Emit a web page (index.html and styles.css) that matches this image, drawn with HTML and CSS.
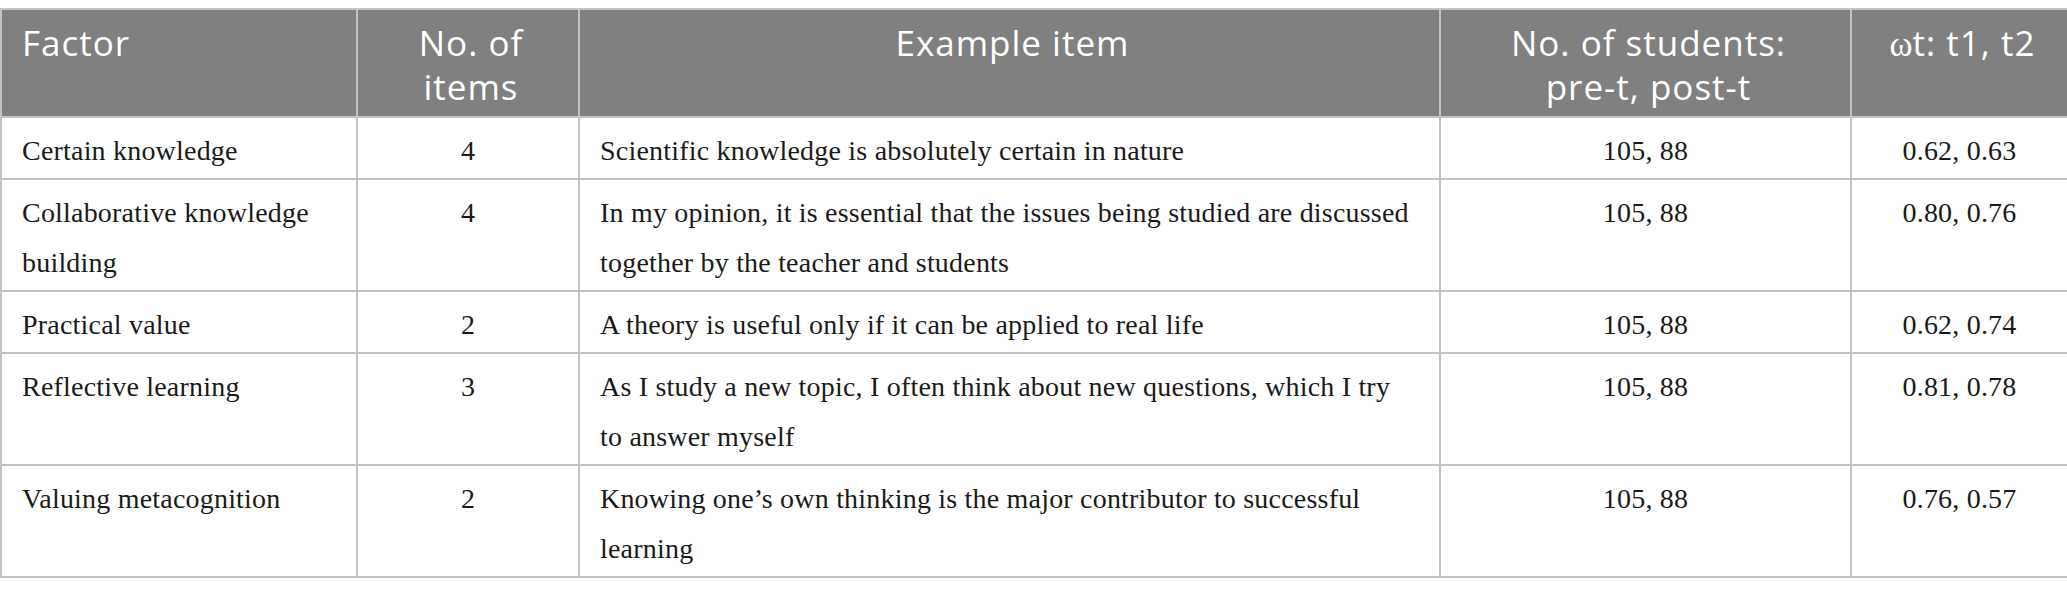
FILE: index.html
```html
<!DOCTYPE html>
<html lang="en">
<head>
<meta charset="utf-8">
<title>Table</title>
<link rel="stylesheet" href="styles.css">
</head>
<body>
<table class="data">
  <colgroup>
    <col class="c1"><col class="c2"><col class="c3"><col class="c4"><col class="c5">
  </colgroup>
  <thead>
    <tr>
      <th class="left">Factor</th>
      <th>No. of<br>items</th>
      <th>Example item</th>
      <th>No. of students:<br>pre-t, post-t</th>
      <th><span class="omega">ω</span>t: t1, t2</th>
    </tr>
  </thead>
  <tbody>
    <tr>
      <td>Certain knowledge</td>
      <td class="ctr">4</td>
      <td class="item">Scientific knowledge is absolutely certain in nature</td>
      <td class="ctr">105, 88</td>
      <td class="ctr">0.62, 0.63</td>
    </tr>
    <tr>
      <td>Collaborative knowledge building</td>
      <td class="ctr">4</td>
      <td class="item">In my opinion, it is essential that the issues being studied are discussed together by the teacher and students</td>
      <td class="ctr">105, 88</td>
      <td class="ctr">0.80, 0.76</td>
    </tr>
    <tr>
      <td>Practical value</td>
      <td class="ctr">2</td>
      <td class="item">A theory is useful only if it can be applied to real life</td>
      <td class="ctr">105, 88</td>
      <td class="ctr">0.62, 0.74</td>
    </tr>
    <tr>
      <td>Reflective learning</td>
      <td class="ctr">3</td>
      <td class="item">As I study a new topic, I often think about new questions, which I try to answer myself</td>
      <td class="ctr">105, 88</td>
      <td class="ctr">0.81, 0.78</td>
    </tr>
    <tr>
      <td>Valuing metacognition</td>
      <td class="ctr">2</td>
      <td class="item">Knowing one’s own thinking is the major contributor to successful learning</td>
      <td class="ctr">105, 88</td>
      <td class="ctr">0.76, 0.57</td>
    </tr>
  </tbody>
</table>
</body>
</html>
```

FILE: styles.css
```css
html, body {
  margin: 0;
  padding: 0;
  background: #ffffff;
}
body {
  padding-top: 8px;
}
.data {
  width: 2067px;
  border-collapse: collapse;
  table-layout: fixed;
}
.c1 { width: 356px; }
.c2 { width: 222px; }
.c3 { width: 861px; }
.c4 { width: 411px; }
.c5 { width: 217px; }
.data th,
.data td {
  border: 2px solid #c3c3c3;
  vertical-align: top;
}
.data th {
  background: #808080;
  color: #ffffff;
  font-family: "Open Sans", "Liberation Sans", sans-serif;
  font-weight: 400;
  font-size: 35px;
  letter-spacing: 1px;
  line-height: 44px;
  text-align: center;
  padding: 11px 14px 7px 20px;
  height: 107px;
  box-sizing: border-box;
}
.data th.left {
  text-align: left;
}
.omega {
  font-family: "Liberation Serif", serif;
  letter-spacing: 0;
}
.data td {
  font-family: "Liberation Serif", "Times New Roman", serif;
  font-size: 28px;
  letter-spacing: 0.2px;
  line-height: 50px;
  color: #1a1a1a;
  padding: 8px 14px 2px 20px;
  text-align: left;
}
.data td.item {
  padding-right: 24px;
}
.data td.ctr {
  text-align: center;
  padding-left: 18px;
  padding-right: 18px;
}
```
